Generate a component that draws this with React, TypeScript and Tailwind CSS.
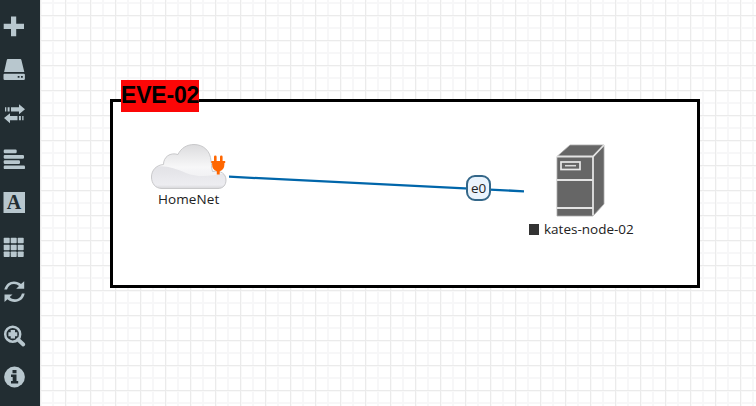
import type { ReactNode } from 'react';

function Tool({ label, className, children }: { label: string; className: string; children: ReactNode }) {
  return (
    <button aria-label={label} className={`block h-[22px] w-[22px] shrink-0 ${className}`}>
      <svg width="22" height="22" viewBox="0 0 22 22" fill="currentColor" className="overflow-visible">
        {children}
      </svg>
    </button>
  );
}

function Sidebar() {
  return (
    <nav className="flex h-full w-10 shrink-0 flex-col bg-[#222d32] pl-[3px] text-[#b8c7ce]">
      <Tool label="Add object" className="mt-[15px]">
        <path d="M8 1.500h5.200v7.300H21V14h-7.800v7.200H8V14H.7V8.800H8z" />
      </Tool>
      <Tool label="Nodes" className="mt-[22px]">
        <path d="M4.700 0h12.600q.9 0 1.100.9l2.900 12H1.100l2.700-12Q4 0 4.700 0z" />
        <path fillRule="evenodd" d="M1.500 14.700h19.300q1.100 0 1.100 1v4q0 1.300-1.200 1.300H1.700Q.5 21 .5 19.700v-4q0-1 1-1zM14.700 17v1.700h1.800V17zM18 17v1.700h1.800V17z" />
      </Tool>
      <Tool label="Networks" className="mt-[22px]">
        <path d="M2 4.200h1.300v4.300H2zM4.600 4.200h2v4.300h-2zM8 4.200h8V1.300L22 6.300l-6 5V8.500H8z" />
        <path d="M20.500 13h-1.300v4.200h1.300zM17.900 13h-2v4.200h2zM14.500 13H7v-2.800L1 15l6 5.200v-3h7.500z" />
      </Tool>
      <Tool label="Startup configs" className="mt-[23px]">
        <rect x=".7" y="1.500" width="13" height="3.800" rx="1.200" />
        <rect x=".7" y="6.900" width="20.300" height="3.800" rx="1.200" />
        <rect x=".7" y="12.200" width="16.300" height="3.800" rx="1.200" />
        <rect x=".7" y="17.500" width="21.300" height="3.600" rx="1.200" />
      </Tool>
      <Tool label="Text objects" className="mt-[21px]">
        <rect x=".5" y="1" width="21.500" height="21" />
        <text x="11" y="18.300" textAnchor="middle" className="fill-[#222d32] font-['Liberation_Serif',serif] text-[20px] font-bold">A</text>
      </Tool>
      <Tool label="More actions" className="mt-[23px]">
        {[1.7, 8.7, 15.5].map((y) =>
          [0.7, 7.7, 14.7].map((x) => <rect key={`${x}-${y}`} x={x} y={y} width="6" height="5.500" rx=".7" />),
        )}
      </Tool>
      <Tool label="Refresh topology" className="mt-[23px]">
        <path d="M1.300 8.500C2.600 3.300 6.400.4 11 .4c2.800 0 5.200 1 7 2.700L21.200.2v7.600h-8l2.800-2.700C14.600 3.700 13 3 11 3 7.600 3 5 5 4 8.500z" />
        <path d="M21.700 12.500c-1 5.200-4.900 8.400-9.900 8.400-2.800 0-5.400-1-7.300-2.700L1.500 21v-7.600h8l-2.800 2.700c1.300 1.400 3 2.200 5.100 2.200 3.500 0 6.200-2.200 7.100-5.800z" />
      </Tool>
      <Tool label="Zoom" className="mt-[22px]">
        <circle cx="9.700" cy="9.200" r="7.500" fill="none" stroke="currentColor" strokeWidth="2.500" />
        <path d="M7.700 4.900H12v2.300h2.300v4.100H12v2.300H7.700v-2.300H5.400V7.200h2.300z" />
        <path d="M15 14.500l5.300 5" stroke="currentColor" strokeWidth="3.800" strokeLinecap="round" />
      </Tool>
      <Tool label="Status" className="mt-[19px]">
        <circle cx="11.500" cy="11" r="10.400" />
        <path className="fill-[#222d32]" d="M9.500 4h4v3.200h-4zM8 8.600h5.500v6.500h1.700v2.400H8v-2.400h1.700v-4.100H8z" />
      </Tool>
    </nav>
  );
}

function Cloud() {
  return (
    <svg width="78" height="48" viewBox="0 0 78 48" className="block">
      <defs>
        <linearGradient id="cloud" x1="0" y1="0" x2="0" y2="1">
          <stop offset="0" stopColor="#dadadc" />
          <stop offset=".5" stopColor="#f7f7f8" />
          <stop offset="1" stopColor="#e8e8ec" />
        </linearGradient>
        <linearGradient id="shade" x1="0" y1="0" x2="0" y2="1">
          <stop offset="0" stopColor="#e2e2e6" />
          <stop offset=".75" stopColor="#ededf1" />
          <stop offset="1" stopColor="#c8c8ca" />
        </linearGradient>
        <clipPath id="cloudShape">
          <path d="M12 45.500C5 45.500 1.500 40 1.500 34c0-7 5-12 12-12.500C13.500 14 20 9 28 11.500 31 5 37 1.500 44 1.500c9.500 0 16.500 6.500 17 16.500 1 3 0 6 1.500 10.500C71 27 76 31 76 37c0 5-3 8.500-8 8.500z" />
        </clipPath>
      </defs>
      <g clipPath="url(#cloudShape)">
        <rect width="78" height="48" fill="url(#cloud)" />
        <path d="M0 25C14 21 23 25 36 30c13 5 24 3 42 0v18H0z" fill="url(#shade)" />
      </g>
      <path d="M12 45.500C5 45.500 1.500 40 1.500 34c0-7 5-12 12-12.500C13.500 14 20 9 28 11.500 31 5 37 1.500 44 1.500c9.500 0 16.500 6.500 17 16.500 1 3 0 6 1.500 10.500C71 27 76 31 76 37c0 5-3 8.500-8 8.500z" fill="none" stroke="#c4c4c6" strokeWidth=".9" />
      <path d="M64 13.700q0-1.200 1.300-1.200t1.300 1.200V18h3.400v-4.300q0-1.200 1.300-1.200t1.300 1.200V18h2.600v2h-.8v1.500q0 5-4.700 6.800v3.200h-2.900v-3.200q-4.700-1.800-4.700-6.800V20h-.8v-2H64z" fill="#ff6600" />
    </svg>
  );
}

function Server() {
  return (
    <svg width="50" height="73" viewBox="0 0 50 73" className="block">
      <path d="M1 12.500L14 1h34v59L37 72H1z" fill="#666" stroke="#aaa" strokeWidth=".8" />
      <path d="M1 12.500h36L48 1M37 12.500v59M1 36h36M1 64h36" fill="none" stroke="#e3e3e3" strokeWidth="1.800" />
      <rect x="5" y="18" width="19" height="7.500" fill="none" stroke="#e8e8e8" strokeWidth="1.700" />
      <path d="M9 21.700h11" stroke="#ddd" strokeWidth="1.500" />
    </svg>
  );
}

export default function App() {
  return (
    <div className="flex h-[406px] w-[756px] overflow-hidden bg-white font-['Open_Sans','Noto_Sans',sans-serif] text-[#222]">
      <Sidebar />
      <main className="relative h-full flex-1 overflow-hidden">
        <svg width="716" height="406" className="absolute inset-0">
          <defs>
            <pattern id="grid" x="0" y="15" width="25" height="25" patternUnits="userSpaceOnUse">
              <path d="M13 0v25M0 13h25" stroke="#f7f7f8" strokeWidth="2" />
              <path d="M.5 0v25M0 .5h25" stroke="#ebebeb" strokeWidth="1" />
              <path d="M1.500 1v24M1 1.500h24" stroke="#f9f9f9" strokeWidth="1" />
            </pattern>
          </defs>
          <rect width="716" height="406" fill="url(#grid)" />
        </svg>
        <div className="absolute left-[70px] top-[99px] h-[189px] w-[590px] border-[3px] border-black bg-white" />
        <div className="absolute left-[81px] top-[80px] h-8 w-[78px] whitespace-nowrap bg-[#fc0707] font-['Liberation_Sans',Arial,sans-serif] text-[23px] font-bold leading-[31px] tracking-[-0.2px] text-black">EVE-02</div>
        <svg width="716" height="406" className="absolute inset-0">
          <path d="M189 176.700L484 191.300" stroke="#0066aa" strokeWidth="2.300" />
        </svg>
        <div className="absolute left-[426px] top-[175px] flex h-[26px] w-[25px] items-center justify-center rounded-[9px] border-2 border-[#346789] bg-[#eaf4fd] pt-px text-[13.500px] font-medium leading-none tracking-[-0.2px]">e0</div>
        <div className="absolute left-[110px] top-[143px]"><Cloud /></div>
        <div className="absolute left-[118px] top-[190px] whitespace-nowrap text-[13.500px] font-medium leading-[18px] tracking-[0.1px]">HomeNet</div>
        <div className="absolute left-[516px] top-[144px]"><Server /></div>
        <div className="absolute left-[489px] top-[220px] flex items-center gap-[5px] whitespace-nowrap text-[13.500px] font-medium leading-[18px]">
          <span className="h-[11px] w-2.5 bg-[#333]" />
          kates-node-02
        </div>
      </main>
    </div>
  );
}
